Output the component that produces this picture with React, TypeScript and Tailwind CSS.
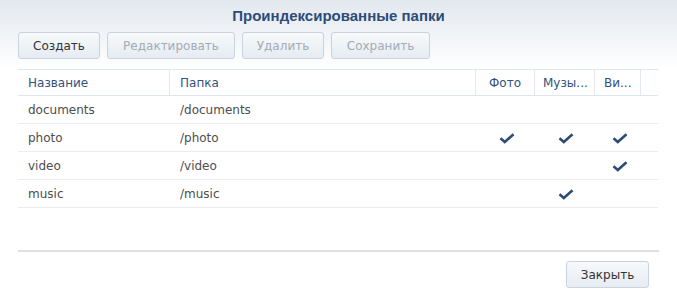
import React from 'react';

const rows = [
  { name: 'documents', path: '/documents', photo: false, music: false, video: false },
  { name: 'photo', path: '/photo', photo: true, music: true, video: true },
  { name: 'video', path: '/video', photo: false, music: false, video: true },
  { name: 'music', path: '/music', photo: false, music: true, video: false },
];

function Check() {
  return (
    <svg width="16" height="12" viewBox="0 0 16 12" className="block">
      <path d="M1.5 6.2 L5.8 10 L14.5 2.2" fill="none" stroke="#2e4b73" strokeWidth="2.6" strokeLinejoin="miter" />
    </svg>
  );
}

function Button({ label, disabled, className }: { label: string; disabled?: boolean; className?: string }) {
  return (
    <button
      className={
        'h-[27px] rounded-[3px] border border-[#c9d3de] bg-gradient-to-b from-[#f7f9fb] to-[#e6ecf2] text-[12px] ' +
        (disabled ? 'text-[#a3abb5] ' : 'text-[#333] ') +
        (className ?? '')
      }
    >
      {label}
    </button>
  );
}

export default function App() {
  return (
    <div
      className="w-[677px] h-[295px] overflow-hidden bg-white flex flex-col text-[12px]"
      style={{ fontFamily: '"DejaVu Sans", Verdana, sans-serif' }}
    >
      {/* header */}
      <div className="bg-gradient-to-b from-[#e2e8ef] to-[#ffffff] pb-[10px]">
        <div
          className="h-[32px] flex items-center justify-center font-bold text-[15px] text-[#2d4c78]"
          style={{ fontFamily: '"Liberation Sans", Arial, sans-serif' }}
        >
          Проиндексированные папки
        </div>
        <div className="flex gap-[7px] px-[18px]">
          <Button label="Создать" className="w-[82px]" />
          <Button label="Редактировать" disabled className="w-[128px]" />
          <Button label="Удалить" disabled className="w-[82px]" />
          <Button label="Сохранить" disabled className="w-[99px]" />
        </div>
      </div>

      {/* table */}
      <div className="mx-[18px] w-[640px]">
        <div className="flex h-[27px] border-y border-[#dfe5ec] text-[#33527c]">
          <div className="w-[152px] pl-[10px] flex items-center border-r border-[#e3e8ee]">Название</div>
          <div className="w-[306px] pl-[10px] flex items-center border-r border-[#e3e8ee]">Папка</div>
          <div className="w-[59px] flex items-center justify-center border-r border-[#e3e8ee]">Фото</div>
          <div className="w-[60px] pl-[8px] flex items-center border-r border-[#e3e8ee] whitespace-nowrap">Музы...</div>
          <div className="w-[46px] pl-[9px] flex items-center border-r border-[#e3e8ee] whitespace-nowrap">Ви...</div>
          <div className="flex-1" />
        </div>
        {rows.map((r) => (
          <div key={r.name} className="flex h-[28px] border-b border-[#ececec] text-[#4d4d4d]">
            <div className="w-[152px] pl-[10px] flex items-center">{r.name}</div>
            <div className="w-[306px] pl-[10px] flex items-center">{r.path}</div>
            <div className="w-[59px] flex items-center justify-center pl-[2px]">{r.photo && <Check />}</div>
            <div className="w-[60px] flex items-center justify-center pl-[2px]">{r.music && <Check />}</div>
            <div className="w-[46px] flex items-center justify-center pl-[4px]">{r.video && <Check />}</div>
            <div className="flex-1" />
          </div>
        ))}
      </div>

      <div className="flex-1" />

      {/* footer */}
      <div className="mx-[18px] w-[641px] border-t-2 border-[#e0e0e0] pt-[9px] pb-[7px] flex justify-end">
        <Button label="Закрыть" className="w-[83px] mr-[10px]" />
      </div>
    </div>
  );
}
